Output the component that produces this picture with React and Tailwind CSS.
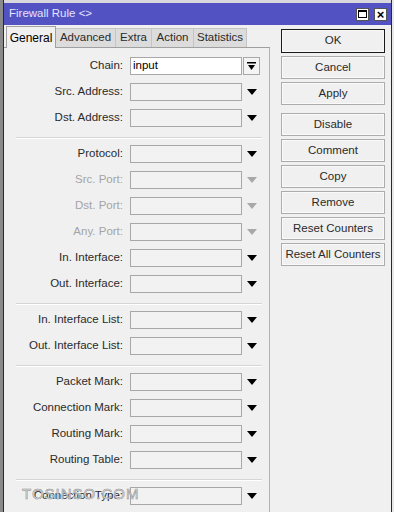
const FONT = "font-['Liberation_Sans',Arial,sans-serif]";

const groups = [
  [
    { label: "Chain:", value: "input", chain: true },
    { label: "Src. Address:" },
    { label: "Dst. Address:" },
  ],
  [
    { label: "Protocol:" },
    { label: "Src. Port:", disabled: true },
    { label: "Dst. Port:", disabled: true },
    { label: "Any. Port:", disabled: true },
    { label: "In. Interface:" },
    { label: "Out. Interface:" },
  ],
  [{ label: "In. Interface List:" }, { label: "Out. Interface List:" }],
  [
    { label: "Packet Mark:" },
    { label: "Connection Mark:" },
    { label: "Routing Mark:" },
    { label: "Routing Table:" },
  ],
  [{ label: "Connection Type:" }],
];

const tabs = [
  { name: "General", w: "w-[50px]", active: true },
  { name: "Advanced", w: "w-[60px]" },
  { name: "Extra", w: "w-[36px]" },
  { name: "Action", w: "w-[42px]" },
  { name: "Statistics", w: "w-[53px]" },
];

function Arrow({ disabled }) {
  return (
    <svg width="10" height="6" viewBox="0 0 10 6" className="block">
      <path d="M0 0h10L5 6z" fill={disabled ? "#a8a8a8" : "#000"} />
    </svg>
  );
}

function Row({ label, value, chain, disabled }) {
  return (
    <div className="flex items-center h-[18px]">
      <div className={`w-[120px] pr-[1px] text-right text-[11.5px] leading-none ${disabled ? "text-[#a4a4a4]" : "text-[#2a2a2a]"}`}>
        {label}
      </div>
      <div
        className={`ml-[6px] w-[112px] h-[18px] border border-[#a8a8a8] flex items-center px-[2px] text-[11.5px] text-black ${chain ? "bg-white" : "bg-[#f2f2f2]"}`}
      >
        {value}
      </div>
      {chain ? (
        <div className="ml-[1px] w-[17px] h-[18px] border border-[#a8a8a8] bg-[#f4f4f4] flex items-center justify-center">
          <svg width="9" height="9" viewBox="0 0 9 9">
            <rect x="0" y="0" width="9" height="1.5" fill="#000" />
            <path d="M1 3h7L4.5 8z" fill="#000" />
          </svg>
        </div>
      ) : (
        <div className="w-[20px] flex justify-center">
          <Arrow disabled={disabled} />
        </div>
      )}
    </div>
  );
}

function Separator() {
  return (
    <div className="mt-[10px] mb-[6px] ml-[12px] w-[246px] border-t border-[#d6d6d6] border-b border-b-white" />
  );
}

function Btn({ children, primary }) {
  return (
    <div
      className={`flex items-center justify-center text-[11.5px] text-[#2a2a2a] bg-[#f0f0f0] ${
        primary ? "h-[24px] border border-[#1a1a1a] shadow-[inset_0_0_0_1px_#f8f8f8]" : "h-[23px] border border-[#acacac] shadow-[inset_0_0_0_1px_#fafafa]"
      }`}
    >
      {children}
    </div>
  );
}

export default function App() {
  return (
    <div className={`${FONT} relative w-[394px] h-[512px] overflow-hidden bg-[#f0f0f0]`}>
      <div className="flex h-full">
        <div className="w-[3px] bg-[#8a8a8a]" />
        <div className="flex-1 flex flex-col border-l border-[#2a2a2a] border-r border-r-[#2a2a2a]">
          <div className="h-[3px] bg-[#d8d8de]" />
          {/* title bar */}
          <div className="h-[22px] bg-[#5252c2] flex items-center pl-[5px] pr-[4px]">
            <span className="text-[11.5px] text-[#e4e4ff]">Firewall Rule &lt;&gt;</span>
            <div className="ml-auto flex gap-[5px]">
              <div className="w-[13px] h-[13px] bg-white border border-[#555] flex items-center justify-center">
                <div className="w-[9px] h-[8px] border border-black border-t-2" />
              </div>
              <div className="w-[13px] h-[13px] bg-white border border-[#555] flex items-center justify-center text-[13px] font-bold leading-none text-black">
                ×
              </div>
            </div>
          </div>

          <div className="flex flex-1">
            {/* left panel */}
            <div className="w-[266px] flex flex-col">
              <div className="flex items-end h-[23px] pl-[2px] border-b border-[#a0a0a0]">
                {tabs.map((t) =>
                  t.active ? (
                    <div
                      key={t.name}
                      className={`${t.w} h-[22px] -mb-[1px] bg-[#f0f0f0] border border-b-0 border-[#a0a0a0] flex items-center justify-center text-[12px] text-black`}
                    >
                      {t.name}
                    </div>
                  ) : (
                    <div
                      key={t.name}
                      className={`${t.w} h-[19px] bg-[#dcdcdc] border-t border-r border-[#c4c4c4] flex items-center justify-center text-[11.5px] text-[#2a2a2a]`}
                    >
                      {t.name}
                    </div>
                  )
                )}
              </div>
              <div className="flex-1 border-r border-[#b4b4b4] pt-[9px]">
                {groups.map((g, gi) => (
                  <div key={gi}>
                    {gi > 0 && <Separator />}
                    <div className="flex flex-col gap-[8px]">
                      {g.map((r) => (
                        <Row key={r.label} {...r} />
                      ))}
                    </div>
                  </div>
                ))}
              </div>
            </div>

            {/* right buttons */}
            <div className="w-[104px] ml-[11px] pt-[4px] flex flex-col gap-[3px]">
              <Btn primary>OK</Btn>
              <Btn>Cancel</Btn>
              <Btn>Apply</Btn>
              <div className="h-[2px]" />
              <Btn>Disable</Btn>
              <Btn>Comment</Btn>
              <Btn>Copy</Btn>
              <Btn>Remove</Btn>
              <Btn>Reset Counters</Btn>
              <Btn>Reset All Counters</Btn>
            </div>
          </div>
        </div>
        <div className="w-[2px] bg-[#e8e8e8]" />
      </div>

      {/* watermark */}
      <div className="absolute left-[22px] top-[483px] text-[15px] tracking-[1px] text-[#e0e0e0] [-webkit-text-stroke:0.5px_#8a8a8a] pointer-events-none">
        TOSINSO.COM
      </div>
    </div>
  );
}
